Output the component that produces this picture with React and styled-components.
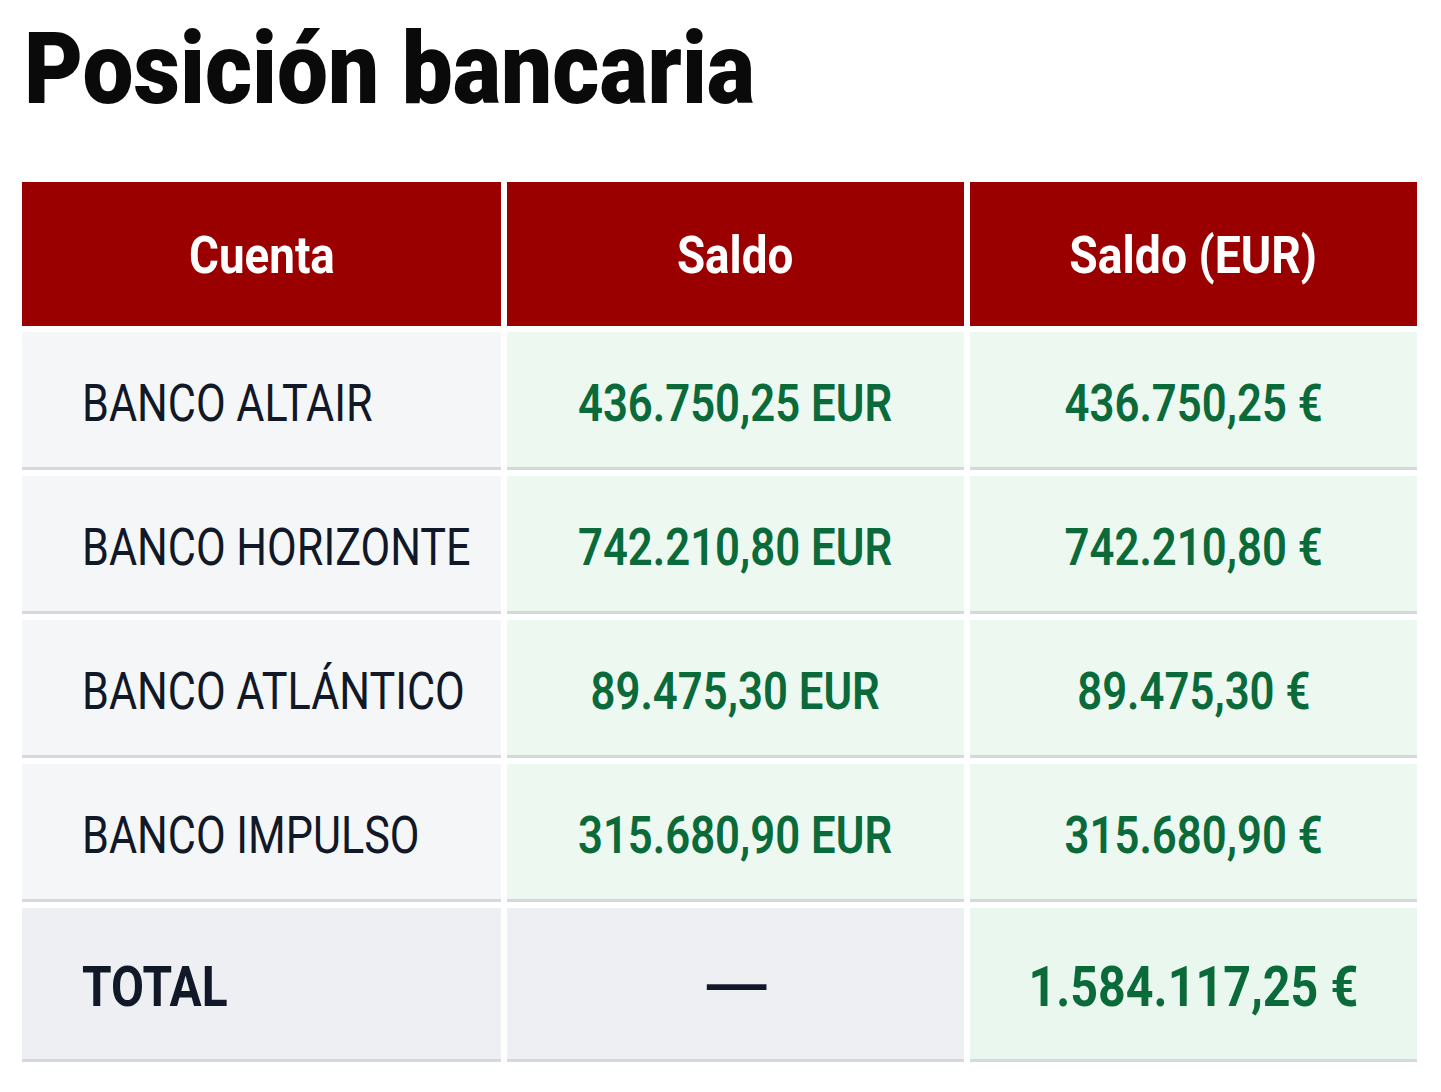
import React from "react";
import styled, { createGlobalStyle } from "styled-components";

const GlobalStyle = createGlobalStyle`
  html, body { margin: 0; padding: 0; background: #ffffff; }
  body { font-family: Roboto, "Liberation Sans", Arial, sans-serif; }
  * { box-sizing: border-box; }
`;

const Page = styled.div`
  padding: 19px 24px 0 22px;
  width: 1441px;
`;

const Title = styled.h1`
  margin: 0 0 63px 0;
  padding-left: 2px;
  font-size: 100px;
  line-height: 100px;
  height: 100px;
  font-weight: 900;
  color: #0a0a0a;
  white-space: nowrap;
`;

const Squeeze = styled.span`
  display: inline-block;
  white-space: nowrap;
  transform: scaleX(${(p) => p.$x || 0.83});
  transform-origin: ${(p) => (p.$origin === "left" ? "left center" : "center center")};
`;

const Table = styled.div`
  display: grid;
  grid-template-columns: 479px 457px 447px;
  grid-template-rows: 144px repeat(4, 138px) 154px;
  column-gap: 6px;
  row-gap: 6px;
`;

const HeadCell = styled.div`
  background: #9b0000;
  color: #ffffff;
  font-size: 52px;
  font-weight: 700;
  display: flex;
  align-items: center;
  justify-content: center;
  padding-top: 2px;
`;

const Cell = styled.div`
  display: flex;
  align-items: center;
  justify-content: ${(p) => (p.$left ? "flex-start" : "center")};
  padding-left: ${(p) => (p.$left ? "60px" : "0")};
  padding-top: 7px;
  background: ${(p) => p.$bg};
  border-bottom: 3px solid #d5d8de;
  font-size: ${(p) => (p.$big ? "55px" : "52px")};
  font-weight: ${(p) => p.$weight || 400};
  color: ${(p) => p.$color};
`;

const GRAY = "#f5f6f7";
const GREEN_BG = "#edf8f1";
const TOTAL_GRAY = "#eeeff3";
const TOTAL_GREEN = "#e9f7ee";
const DARK = "#111827";
const GREEN = "#0b6a3a";

const rows = [
  ["BANCO ALTAIR", "436.750,25 EUR", "436.750,25 €"],
  ["BANCO HORIZONTE", "742.210,80 EUR", "742.210,80 €"],
  ["BANCO ATLÁNTICO", "89.475,30 EUR", "89.475,30 €"],
  ["BANCO IMPULSO", "315.680,90 EUR", "315.680,90 €"],
];

export default function App() {
  return (
    <>
      <GlobalStyle />
      <Page>
        <Title>
          <Squeeze $x={0.907} $origin="left">Posición bancaria</Squeeze>
        </Title>
        <Table>
          <HeadCell><Squeeze $x={0.88}>Cuenta</Squeeze></HeadCell>
          <HeadCell><Squeeze $x={0.88}>Saldo</Squeeze></HeadCell>
          <HeadCell><Squeeze $x={0.89}>Saldo (EUR)</Squeeze></HeadCell>
          {rows.map(([name, saldo, eur]) => (
            <React.Fragment key={name}>
              <Cell $left $bg={GRAY} $color={DARK}>
                <Squeeze $origin="left" $x={0.83}>{name}</Squeeze>
              </Cell>
              <Cell $bg={GREEN_BG} $color={GREEN} $weight={600}>
                <Squeeze $x={0.84}>{saldo}</Squeeze>
              </Cell>
              <Cell $bg={GREEN_BG} $color={GREEN} $weight={600}>
                <Squeeze $x={0.84}>{eur}</Squeeze>
              </Cell>
            </React.Fragment>
          ))}
          <Cell $left $bg={TOTAL_GRAY} $color={DARK} $weight={700} $big>
            <Squeeze $origin="left" $x={0.87}>TOTAL</Squeeze>
          </Cell>
          <Cell $bg={TOTAL_GRAY} $color={DARK} $weight={700}>
            <Squeeze $x={1.7}>—</Squeeze>
          </Cell>
          <Cell $bg={TOTAL_GREEN} $color={GREEN} $weight={700} $big>
            <Squeeze $x={0.88}>1.584.117,25 €</Squeeze>
          </Cell>
        </Table>
      </Page>
    </>
  );
}
